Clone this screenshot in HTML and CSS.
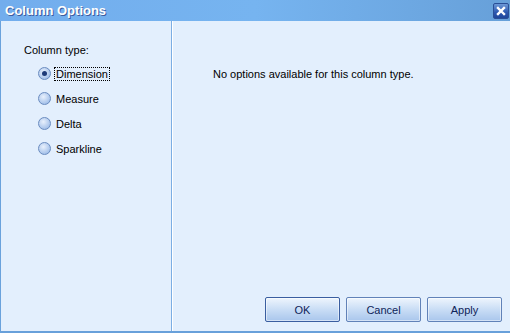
FILE: index.html
```html
<!DOCTYPE html>
<html lang="en">
<head>
    <meta charset="UTF-8">
    <title>Column Options</title>
    <link rel="stylesheet" href="styles.css">
</head>
<body>
    <div class="dialog">
        <div class="titlebar">
            <span class="title">Column Options</span>
            <span class="close">
                <svg width="14" height="14" viewBox="0 0 14 14">
                    <path d="M4 4 L10 10 M10 4 L4 10" stroke="#fff" stroke-width="2.4" stroke-linecap="square"/>
                </svg>
            </span>
        </div>
        <div class="content">
            <div class="side">
                <div class="side-label">Column type:</div>
                <label class="radio checked"><span class="dot"></span><span class="rtext focus">Dimension</span></label>
                <label class="radio"><span class="dot"></span><span class="rtext">Measure</span></label>
                <label class="radio"><span class="dot"></span><span class="rtext">Delta</span></label>
                <label class="radio"><span class="dot"></span><span class="rtext">Sparkline</span></label>
            </div>
            <div class="main">
                <p class="message">No options available for this column type.</p>
                <div class="buttons">
                    <button class="btn">OK</button>
                    <button class="btn">Cancel</button>
                    <button class="btn">Apply</button>
                </div>
            </div>
        </div>
    </div>
</body>
</html>
```

FILE: styles.css
```css
html, body {
    margin: 0;
    padding: 0;
}
body {
    width: 510px;
    height: 333px;
    overflow: hidden;
    font-family: "Liberation Sans", Arial, sans-serif;
    font-size: 11px;
    color: #000;
}
.dialog {
    height: 333px;
    display: flex;
    flex-direction: column;
    background: #e3effd;
}
.titlebar {
    height: 21px;
    display: flex;
    align-items: center;
    justify-content: space-between;
    background: linear-gradient(to right, #72aded, #76b4f0 50%, #67a0d9);
}
.title {
    margin-left: 5px;
    color: #fff;
    font-family: "Liberation Sans", Arial, sans-serif;
    font-weight: bold;
    font-size: 13px;
    text-shadow: 1px 1px 0 #3d5c9e;
}
.close {
    width: 16px;
    height: 16px;
    margin-right: 1px;
    display: flex;
    align-items: center;
    justify-content: center;
    border-radius: 2px;
    background: linear-gradient(#6d98d6, #2c58b0 60%, #1f469a);
    border: 1px solid #2a4f96;
    box-sizing: border-box;
}
.content {
    flex: 1;
    display: flex;
    border-left: 1px solid #6aa2dc;
    border-bottom: 2px solid #68a0da;
}
.side {
    width: 171px;
    border-right: 1px solid #7caee4;
    box-shadow: 1px 0 0 #fff;
    padding: 23px 0 0 23px;
    box-sizing: border-box;
}
.side-label {
    height: 16px;
    margin-bottom: 1px;
}
.radio {
    display: flex;
    align-items: center;
    height: 25px;
    padding-left: 14px;
}
.dot {
    width: 11px;
    height: 11px;
    border-radius: 50%;
    border: 1px solid #6a8cc0;
    background: radial-gradient(circle at 40% 35%, #e8f0fc, #adc7ec 65%, #8caddf);
    margin-right: 3px;
    position: relative;
}
.checked .dot::after {
    content: "";
    position: absolute;
    left: 3px;
    top: 3px;
    width: 5px;
    height: 5px;
    border-radius: 50%;
    background: #1d3a78;
}
.rtext {
    padding: 0 1px;
    border: 1px dotted transparent;
}
.rtext.focus {
    border-color: #000;
}
.main {
    flex: 1;
    display: flex;
    flex-direction: column;
    padding-left: 41px;
}
.message {
    margin: 47px 0 0 0;
    flex: 1;
}
.buttons {
    display: flex;
    justify-content: flex-end;
    gap: 6px;
    padding-right: 8px;
    margin-bottom: 9px;
}
.btn {
    width: 75px;
    height: 25px;
    font-family: "Liberation Sans", Arial, sans-serif;
    font-size: 11px;
    color: #0f2458;
    border: 1px solid #6182b8;
    border-radius: 2px;
    background: linear-gradient(#eef5fd, #c9ddf5 50%, #a9c6ec);
    box-shadow: inset 0 0 0 1px rgba(255, 255, 255, 0.5);
}
.btn:first-child {
    border-color: #3a5ea0;
}
```
